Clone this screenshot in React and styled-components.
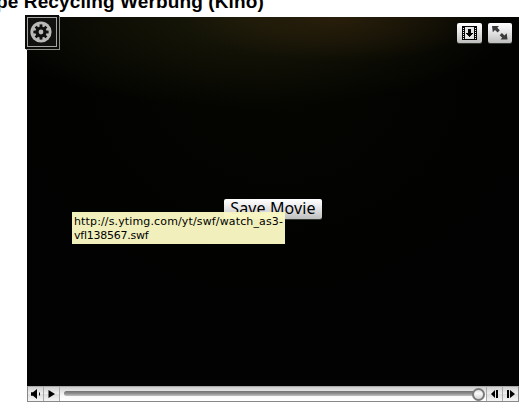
import React from "react";
import styled, { createGlobalStyle } from "styled-components";

const GlobalStyle = createGlobalStyle`
  * { box-sizing: border-box; }
  body { margin: 0; background: #fff; overflow: hidden; }
`;

const Page = styled.main`
  width: 529px;
  height: 412px;
  overflow: hidden;
`;

const Title = styled.h1`
  margin: 0 0 0 -4px;
  height: 17px;
  font: bold 19px/22px "Liberation Sans", Arial, sans-serif;
  letter-spacing: 0.12px;
  color: #000;
  white-space: nowrap;

  span { display: block; transform: translateY(-9px); }
`;

const Player = styled.section`
  position: relative;
  width: 492px;
  height: 385px;
  margin-left: 27px;
  display: flex;
  flex-direction: column;
`;

const Screen = styled.div`
  flex: 1;
  display: flex;
  flex-direction: column;
  align-items: center;
  background:
    radial-gradient(ellipse 150px 45px at 310px 0, rgba(48, 34, 12, 0.75), transparent),
    radial-gradient(ellipse 270px 90px at 220px 0, #1a1909, transparent),
    radial-gradient(ellipse 300px 250px at 250px 60px, #050601, transparent),
    #010201;
`;

const ActionBar = styled.div`
  align-self: flex-end;
  display: flex;
  gap: 6px;
  padding: 6px 7px 0 0;
  height: 182px;
`;

const Button = styled.button`
  display: flex;
  align-items: center;
  justify-content: center;
  width: ${({ $width }) => $width}px;
  height: 20px;
  padding: 0;
  border: 0;
  border-radius: 2px;
  background: linear-gradient(#fff, #f0f0f2 30%, #bebebe);
  box-shadow: 0 1px 0 #343833;
  color: #000;
  white-space: nowrap;
`;

const SaveButton = styled(Button)`
  padding-bottom: 2px;
  font: 16px/18px "Noto Sans", "Lucida Grande", sans-serif;
  letter-spacing: 0.12px;
`;

const SettingsButton = styled.button`
  position: absolute;
  left: -2px;
  top: -2px;
  width: 34px;
  height: 34px;
  padding: 2px;
  border: 0;
  background: #0b0c0a;
  box-shadow: 1px 1px 0 #8d8d89;
`;

const SettingsFrame = styled.span`
  display: flex;
  align-items: center;
  justify-content: center;
  width: 30px;
  height: 30px;
  padding: 0 2px 1px 0;
  border: 1px solid #a6a6a4;
  background: #11120f;
`;

const Tooltip = styled.div`
  position: absolute;
  left: 45px;
  top: 195px;
  width: 213px;
  height: 32px;
  padding: 3px 0 0 2px;
  background: rgba(249, 248, 194, 0.97);
  color: #000;
  font: 11px/14px "DejaVu Sans", "Lucida Grande", sans-serif;
  white-space: nowrap;
`;

const TooltipLine = styled.span`
  display: block;
  letter-spacing: ${({ $tracking }) => $tracking}px;
`;

const Controls = styled.div`
  display: flex;
  height: 16px;
  border: 1px solid #888;
  border-top-color: #aaa;
  background: linear-gradient(#cfcfcf, #f8f8f8 60%, #fff);
`;

const Control = styled.button`
  display: flex;
  align-items: center;
  justify-content: center;
  width: 16px;
  height: 14px;
  padding: 0;
  border: 0;
  border-right: ${({ $side }) => ($side === "left" ? "1px solid #aaa" : "0")};
  border-left: ${({ $side }) => ($side === "right" ? "1px solid #aaa" : "0")};
  background: linear-gradient(#d0d0d0, #efefef 48%, #dedede 52%, #f5f5f5);
`;

const Seek = styled.div`
  flex: 1;
  display: flex;
  align-items: center;
  padding: 0 1px 0 4px;
`;

const Track = styled.div`
  flex: 1;
  height: 5px;
  margin: -1px -2px 0 0;
  border-radius: 3px 0 0 3px;
  background: linear-gradient(#707070, #8e8e8e 50%, #c2c2c2);
`;

const Thumb = styled.div`
  width: 13px;
  height: 13px;
  border: 2px solid #7b7b7b;
  border-radius: 50%;
  background: linear-gradient(#ddd, #fafafa 35%, #d5d5d5);
`;

const GearIcon = () => (
  <svg width="22" height="22" viewBox="0 0 22 22">
    <circle cx="11" cy="11" r="10.6" fill="#babab8" />
    <g fill="#11120f">
      <circle cx="11" cy="11" r="5.6" />
      {[0, 45, 90, 135, 180, 225, 270, 315].map((a) => (
        <rect key={a} x="9.6" y="3.4" width="2.8" height="4" transform={`rotate(${a} 11 11)`} />
      ))}
    </g>
    <circle cx="11" cy="11" r="2.4" fill="#babab8" />
  </svg>
);

const FilmIcon = () => (
  <svg width="15" height="14" viewBox="0 0 15 14" shapeRendering="crispEdges">
    <path fill="#050505" d="M0 0h15v14H0z" />
    <path fill="#e5e5e5" d="M3 1h9v12H3z" />
    <path fill="#eee" d="M1 2h1v1H1zM1 4h1v1H1zM1 6h1v1H1zM1 8h1v1H1zM1 10h1v1H1zM1 12h1v1H1zM13 2h1v1h-1zM13 4h1v1h-1zM13 6h1v1h-1zM13 8h1v1h-1zM13 10h1v1h-1zM13 12h1v1h-1z" />
    <path fill="#050505" d="M6 3h3v4h2v1h-1v1H9v1H8v1H7v-1H6V9H5V8H4V7h2z" />
  </svg>
);

const ExpandIcon = () => (
  <svg width="16" height="14" viewBox="0 0 16 14" fill="#3a3a3a">
    <path d="M0 0h7L5.3 1.7l2.5 2.5-2.2 2.2L3 4 .8 6.2zM15.5 13.5h-7l1.7-1.7-2.5-2.5 2.2-2.2 2.5 2.5 2.3-2.3z" />
  </svg>
);

const SpeakerIcon = () => (
  <svg width="11" height="10" viewBox="0 0 11 10">
    <path d="M1 3.3h2L7 0v10L3 6.7H1z" />
    <path d="M9.5 3.5v3" stroke="#111" />
  </svg>
);

const PlayIcon = () => (
  <svg width="7" height="8" viewBox="0 0 7 8"><path d="M.5 0 7 4 .5 8z" /></svg>
);

const StepIcon = ({ forward }) => (
  <svg width="8" height="8" viewBox="0 0 8 8">
    <path d={forward ? "M0 0h2v8H0zM3 0l5 4-5 4z" : "M5 0h2v8H5zM4 0v8L0 4z"} />
  </svg>
);

export default function App() {
  return (
    <Page>
      <GlobalStyle />
      <Title><span>pe Recycling Werbung (Kino)</span></Title>
      <Player>
        <Screen>
          <ActionBar>
            <Button $width={25} aria-label="Download movie"><FilmIcon /></Button>
            <Button $width={24} aria-label="Full screen"><ExpandIcon /></Button>
          </ActionBar>
          <SaveButton $width={98}>Save Movie</SaveButton>
        </Screen>
        <Controls>
          <Control $side="left" aria-label="Volume"><SpeakerIcon /></Control>
          <Control $side="left" aria-label="Play"><PlayIcon /></Control>
          <Seek><Track /><Thumb /></Seek>
          <Control $side="right" aria-label="Step back"><StepIcon /></Control>
          <Control $side="right" aria-label="Step forward"><StepIcon forward /></Control>
        </Controls>
        <SettingsButton aria-label="Settings"><SettingsFrame><GearIcon /></SettingsFrame></SettingsButton>
        <Tooltip>
          <TooltipLine $tracking={0.14}>http://s.ytimg.com/yt/swf/watch_as3-</TooltipLine>
          <TooltipLine $tracking={-0.25}>vfl138567.swf</TooltipLine>
        </Tooltip>
      </Player>
    </Page>
  );
}
